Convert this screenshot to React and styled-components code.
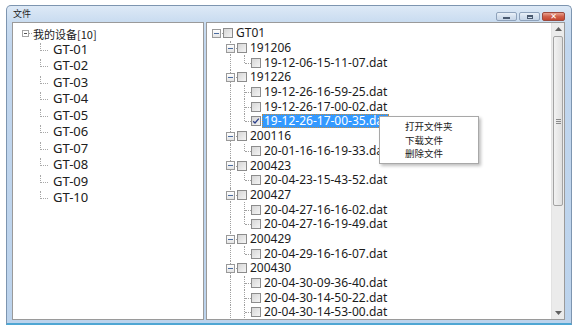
import React from 'react';
import styled, { createGlobalStyle } from 'styled-components';

const GlobalStyle = createGlobalStyle`
  html, body {
    margin: 0;
    padding: 0;
    background: #ffffff;
  }
  body {
    font-family: "Noto Sans", "Noto Sans CJK SC", sans-serif;
  }
`;

const Page = styled.div`
  width: 581px;
  height: 332px;
  padding: 5px 0 0 6px;
  box-sizing: border-box;
  overflow: hidden;
`;

const Window = styled.div`
  width: 566px;
  height: 320px;
  box-sizing: border-box;
  border: 1px solid #7d95b0;
  border-bottom: 2px solid #4fa6d3;
  border-radius: 5px 5px 0 0;
  background: linear-gradient(#dde9f6 0px, #c9dcf0 16px, #c1d6ee 40px, #bcd3ec 100%);
  display: flex;
  flex-direction: column;
`;

const TitleBar = styled.div`
  height: 16px;
  display: flex;
  align-items: flex-end;
  justify-content: space-between;
  padding: 0 6px 0 6px;
`;

const Title = styled.span`
  font-family: "Noto Sans CJK SC", sans-serif;
  font-size: 9px;
  line-height: 10px;
  color: #1e1e1e;
  padding-bottom: 3px;
`;

const Buttons = styled.div`
  display: flex;
  gap: 2px;
  padding-bottom: 1px;
`;

const CaptionButton = styled.div`
  width: ${p => (p.close ? 23 : 21)}px;
  height: 9px;
  box-sizing: border-box;
  border: 1px solid ${p => (p.close ? '#9c4a3e' : '#8ea2bb')};
  border-radius: 2px;
  background: ${p =>
    p.close
      ? 'linear-gradient(#e9a190, #d0614b 50%, #c44630)'
      : 'linear-gradient(#eaf1f9, #d4e0ee 50%, #c7d6e8)'};
  display: flex;
  align-items: center;
  justify-content: center;
`;

const MinGlyph = styled.span`
  width: 7px;
  height: 2px;
  margin-top: 3px;
  background: #4a5a70;
`;

const MaxGlyph = styled.span`
  width: 6px;
  height: 4px;
  box-sizing: border-box;
  border: 1px solid #4a5a70;
  border-top-width: 2px;
`;

const CloseGlyph = styled.span`
  color: #ffffff;
  font-family: "DejaVu Sans", sans-serif;
  font-weight: bold;
  font-size: 8px;
  line-height: 8px;
`;

const Body = styled.div`
  flex: 1;
  display: flex;
  gap: 2px;
  padding: 0 6px 3px 5px;
  min-height: 0;
`;

const Panel = styled.div`
  width: ${p => p.width || 'auto'};
  flex: ${p => (p.grow ? 1 : 'none')};
  box-sizing: border-box;
  border: 1px solid #9a9a9a;
  background: #ffffff;
  overflow: hidden;
  display: flex;
  position: relative;
`;

const DeviceList = styled.div`
  padding: 3px 0 0 9px;
  flex: 1;
`;

const DeviceRoot = styled.div`
  height: 15px;
  display: flex;
  align-items: center;
  font-family: "Noto Sans CJK SC", sans-serif;
  font-size: 11px;
  color: #1a1a1a;
`;

const SmallBox = styled.span`
  width: 7px;
  height: 7px;
  box-sizing: border-box;
  border: 1px solid #a4a4a4;
  position: relative;
  &::after {
    content: '';
    position: absolute;
    left: 1px;
    top: 2px;
    width: 3px;
    height: 1px;
    background: #555;
  }
`;

const Dash = styled.span`
  width: 3px;
  border-top: 1px dotted #a0a0a0;
  margin-right: 1px;
`;

const DeviceRow = styled.div`
  height: 16.5px;
  display: flex;
  align-items: center;
  padding-left: 18px;
  font-size: 13px;
  line-height: 15px;
  color: #202020;
`;

const Elbow = styled.span`
  width: 7px;
  height: 7px;
  margin: -5px 5px 0 0;
  border-left: 1px dotted #a8a8a8;
  border-bottom: 1px dotted #a8a8a8;
`;

const TreeArea = styled.div`
  flex: 1;
  padding: 3px 0 0 2px;
  overflow: hidden;
`;

const Row = styled.div`
  height: 14.7px;
  display: flex;
  align-items: center;
`;

const Guide = styled.span`
  width: 14px;
  height: 100%;
  flex: none;
  position: relative;
  &::before {
    content: '';
    display: ${p => (p.line ? 'block' : 'none')};
    position: absolute;
    left: 7px;
    top: 0;
    bottom: 0;
    border-left: 1px dotted #a0a0a0;
  }
`;

const Joint = styled.span`
  width: 14px;
  height: 100%;
  flex: none;
  position: relative;
  &::before {
    content: '';
    display: ${p => (p.root ? 'none' : 'block')};
    position: absolute;
    left: 7px;
    top: 0;
    bottom: ${p => (p.next ? '0' : '50%')};
    border-left: 1px dotted #a0a0a0;
  }
  &::after {
    content: '';
    position: absolute;
    left: 8px;
    right: 0;
    top: 50%;
    border-top: 1px dotted #a0a0a0;
  }
`;

const Expander = styled.span`
  position: absolute;
  z-index: 1;
  left: 3px;
  top: 3px;
  width: 9px;
  height: 9px;
  box-sizing: border-box;
  border: 1px solid #9a9a9a;
  background: linear-gradient(#ffffff, #e4e4e4);
  &::after {
    content: '';
    position: absolute;
    left: 1px;
    top: 3px;
    width: 5px;
    height: 1px;
    background: #4b6ca0;
  }
`;

const Check = styled.span`
  width: 10px;
  height: 10px;
  flex: none;
  box-sizing: border-box;
  border: 1px solid #8c8c8c;
  background: linear-gradient(135deg, #d6d6d6, #f4f4f4);
  margin-right: 1px;
  display: flex;
  align-items: center;
  justify-content: center;
`;

const Label = styled.span`
  height: 14px;
  display: flex;
  align-items: center;
  font-size: 12px;
  line-height: 12px;
  padding: 0 1px;
  white-space: nowrap;
  box-sizing: border-box;
  background: ${p => (p.selected ? '#3399ff' : 'transparent')};
  color: ${p => (p.selected ? '#ffffff' : '#1c1c1c')};
  border: 1px ${p => (p.selected ? 'dotted #c88c3c' : 'solid transparent')};
`;

const ScrollBar = styled.div`
  width: 12px;
  flex: none;
  background: #ebebeb;
  border-left: 1px solid #e2e2e2;
  display: flex;
  flex-direction: column;
  align-items: center;
`;

const Arrow = styled.span`
  height: 12px;
  display: flex;
  align-items: center;
  justify-content: center;
`;

const Thumb = styled.div`
  width: 10px;
  height: 170px;
  margin-top: 1px;
  box-sizing: border-box;
  border: 1px solid #a3a3a3;
  border-radius: 2px;
  background: linear-gradient(90deg, #f2f2f2, #e0e0e0);
  display: flex;
  align-items: center;
  justify-content: center;
`;

const Grip = styled.span`
  width: 5px;
  height: 5px;
  background: repeating-linear-gradient(#8a8a8a 0 1px, transparent 1px 2px);
`;

const Spacer = styled.div`
  flex: 1;
`;

const Menu = styled.div`
  position: absolute;
  left: 172px;
  top: 93px;
  width: 100px;
  box-sizing: border-box;
  padding: 3px 0 2px;
  background: #ffffff;
  border: 1px solid #a8a8a8;
  box-shadow: 2px 2px 3px rgba(0, 0, 0, 0.25);
  z-index: 5;
`;

const MenuItem = styled.div`
  height: 13.5px;
  padding-left: 25px;
  font-family: "Noto Sans CJK SC", sans-serif;
  font-size: 9.5px;
  line-height: 13.5px;
  color: #1a1a1a;
`;

const groups = [
  { name: '191206', files: ['19-12-06-15-11-07.dat'] },
  { name: '191226', files: ['19-12-26-16-59-25.dat', '19-12-26-17-00-02.dat', '19-12-26-17-00-35.dat'] },
  { name: '200116', files: ['20-01-16-16-19-33.dat'] },
  { name: '200423', files: ['20-04-23-15-43-52.dat'] },
  { name: '200427', files: ['20-04-27-16-16-02.dat', '20-04-27-16-19-49.dat'] },
  { name: '200429', files: ['20-04-29-16-16-07.dat'] },
  { name: '200430', files: ['20-04-30-09-36-40.dat', '20-04-30-14-50-22.dat', '20-04-30-14-53-00.dat'] },
];

const SELECTED = '19-12-26-17-00-35.dat';

const buildRows = () => {
  const rows = [{ level: 0, label: 'GT01', guides: [], expand: true, root: true, next: false }];
  groups.forEach((g, gi) => {
    const groupNext = gi < groups.length - 1;
    rows.push({ level: 1, label: g.name, guides: [false], expand: true, next: true });
    g.files.forEach((f, fi) => {
      rows.push({
        level: 2,
        label: f,
        guides: [false, true],
        next: fi < g.files.length - 1 || !groupNext,
        selected: f === SELECTED,
      });
    });
  });
  return rows;
};

const CheckMark = () => (
  <svg width="8" height="8" viewBox="0 0 8 8">
    <path d="M1.2 4.2 L3 6 L6.8 1.6" fill="none" stroke="#2a3f8a" strokeWidth="1.3" />
  </svg>
);

const TriUp = () => (
  <svg width="7" height="4" viewBox="0 0 7 4"><path d="M0 4 L3.5 0 L7 4 Z" fill="#606060" /></svg>
);

const TriDown = () => (
  <svg width="7" height="4" viewBox="0 0 7 4"><path d="M0 0 L3.5 4 L7 0 Z" fill="#606060" /></svg>
);

const FileTree = () => {
  const rows = buildRows();
  return (
    <TreeArea>
      {rows.map((r, i) => (
        <Row key={i}>
          {r.guides.map((g, gi) => <Guide key={gi} line={g} />)}
          <Joint root={r.root} next={r.next}>
            {r.expand && <Expander />}
          </Joint>
          <Check>{r.selected && <CheckMark />}</Check>
          <Label selected={r.selected}>{r.label}</Label>
        </Row>
      ))}
    </TreeArea>
  );
};

const devices = ['GT-01', 'GT-02', 'GT-03', 'GT-04', 'GT-05', 'GT-06', 'GT-07', 'GT-08', 'GT-09', 'GT-10'];

const App = () => {
  return (
    <>
      <GlobalStyle />
      <Page>
        <Window>
          <TitleBar>
            <Title>文件</Title>
            <Buttons>
              <CaptionButton><MinGlyph /></CaptionButton>
              <CaptionButton><MaxGlyph /></CaptionButton>
              <CaptionButton close><CloseGlyph>✕</CloseGlyph></CaptionButton>
            </Buttons>
          </TitleBar>
          <Body>
            <Panel width="192px">
              <DeviceList>
                <DeviceRoot>
                  <SmallBox />
                  <Dash />
                  我的设备[10]
                </DeviceRoot>
                {devices.map(d => (
                  <DeviceRow key={d}>
                    <Elbow />
                    {d}
                  </DeviceRow>
                ))}
              </DeviceList>
            </Panel>
            <Panel grow>
              <FileTree />
              <ScrollBar>
                <Arrow><TriUp /></Arrow>
                <Thumb><Grip /></Thumb>
                <Spacer />
                <Arrow><TriDown /></Arrow>
              </ScrollBar>
              <Menu>
                <MenuItem>打开文件夹</MenuItem>
                <MenuItem>下载文件</MenuItem>
                <MenuItem>删除文件</MenuItem>
              </Menu>
            </Panel>
          </Body>
        </Window>
      </Page>
    </>
  );
};

export default App;
